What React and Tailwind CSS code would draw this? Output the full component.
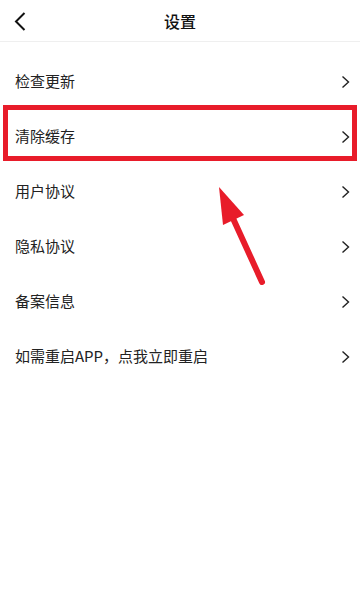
import React from "react";

const items = ["检查更新", "清除缓存", "用户协议", "隐私协议", "备案信息", "如需重启APP，点我立即重启"];

function Chevron() {
  return (
    <svg width="9" height="14" viewBox="0 0 9 14" fill="none">
      <path d="M1.5 1.5 L7.5 7 L1.5 12.5" stroke="#222" strokeWidth="1.4" />
    </svg>
  );
}

export default function App() {
  return (
    <div
      className="relative w-[360px] h-[613px] bg-white overflow-hidden"
      style={{ fontFamily: '"Noto Sans CJK SC", "Noto Sans", sans-serif' }}
    >
      <div className="relative h-[42px] flex items-center justify-center border-b border-[#efefef]">
        <div className="absolute left-[14px] top-[12px]">
          <svg width="12" height="19" viewBox="0 0 12 19" fill="none">
            <path d="M10.5 1 L2 9.5 L10.5 18" stroke="#111" strokeWidth="2" />
          </svg>
        </div>
        <span className="text-[16px] font-medium text-[#111]">设置</span>
      </div>
      <div className="pt-[12px]">
        {items.map((t) => (
          <div key={t} className="h-[55px] flex items-center justify-between pl-[15px] pr-[10px]">
            <span className="text-[15px] text-[#222]">{t}</span>
            <Chevron />
          </div>
        ))}
      </div>
      <div className="absolute left-[3px] top-[105px] w-[354px] h-[56px] border-[5px] border-[#e81c2a]" />
      <svg className="absolute left-0 top-0" width="360" height="613" viewBox="0 0 360 613">
        <line x1="262" y1="282" x2="231" y2="214" stroke="#e81c2a" strokeWidth="6" strokeLinecap="round" />
        <polygon points="219,187 223,225 244,215" fill="#e81c2a" />
      </svg>
    </div>
  );
}
